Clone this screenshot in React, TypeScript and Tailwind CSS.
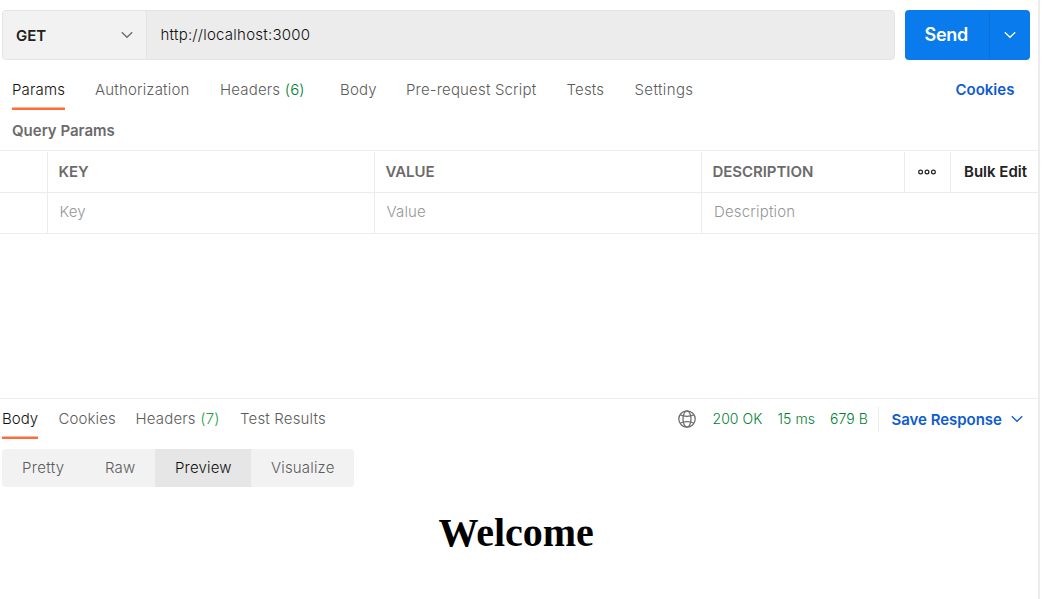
import type { ReactNode } from "react";

function Chevron({ className }: { className: string }) {
  return (
    <svg className={className} width="12" height="8" viewBox="0 0 12 8" fill="none" stroke="currentColor" strokeWidth="1.25">
      <path d="M0.8 1.2 L6 6.3 L11.2 1.2" />
    </svg>
  );
}

function Globe() {
  return (
    <svg className="shrink-0 text-[#6b6b6b]" width="18" height="18" viewBox="0 0 18 18" fill="none" stroke="currentColor" strokeWidth="1.25">
      <circle cx="9" cy="9" r="8.2" />
      <ellipse cx="9" cy="9" rx="4" ry="8.2" />
      <path d="M1.9 4.8 Q9 7.9 16.1 4.8 M1.9 13.2 Q9 10.1 16.1 13.2" />
    </svg>
  );
}

function Dots() {
  return (
    <svg className="-ml-[2px]" width="18" height="6" viewBox="0 0 18 6" fill="none" stroke="#212121" strokeWidth="1.2">
      <circle cx="2.6" cy="3" r="1.9" />
      <circle cx="9" cy="3" r="1.9" />
      <circle cx="15.4" cy="3" r="1.9" />
    </svg>
  );
}

function Tab({ className, active, children }: { className: string; active?: boolean; children: ReactNode }) {
  return (
    <div className={`shrink-0 ${className}`}>
      <div
        className={
          active
            ? "flex h-10 w-fit items-center border-b-2 border-[#ff6c37] pt-[2px] text-[#101010] shadow-[inset_0_-1px_0_#ffb59b]"
            : "flex h-10 w-fit items-center text-[#5c5c5c]"
        }
      >
        {children}
      </div>
    </div>
  );
}

function RequestBar() {
  return (
    <div className="flex h-[50px] pl-[2px]">
      <div className="flex w-[893px] overflow-hidden rounded-[4px] border border-[#e4e4e4] bg-[#ececec]">
        <div className="flex w-[144px] items-center justify-between border-r border-[#e4e4e4] bg-[#f2f2f2] px-[13px]">
          <span className="pt-[2px] font-semibold tracking-normal text-[#212121]">GET</span>
          <Chevron className="text-[#6b6b6b]" />
        </div>
        <div className="flex items-center pl-[13.5px] tracking-[0.23px] text-[#101010]">http://localhost:3000</div>
      </div>
      <div className="ml-[10px] flex w-[125px] overflow-hidden rounded-[4px] bg-[#097bed] text-white">
        <div className="flex w-[85px] items-center border-r border-[#0b70d9] pl-[19.5px] text-[18px] font-semibold tracking-[-0.25px]">
          Send
        </div>
        <div className="flex flex-1 items-center justify-center">
          <Chevron className="" />
        </div>
      </div>
    </div>
  );
}

function ParamsTable() {
  return (
    <div className="border-t border-[#ececec]">
      <div className="flex h-[42px] border-b border-[#ececec] pt-px font-semibold tracking-[-0.05px] text-[#6b6b6b]">
        <div className="w-[48px] border-r border-[#ececec]" />
        <div className="flex w-[327px] items-center border-r border-[#ececec] pl-[10.5px]">KEY</div>
        <div className="flex w-[327px] items-center border-r border-[#ececec] pl-[10.5px]">VALUE</div>
        <div className="flex w-[203px] items-center border-r border-[#ececec] pl-[10.5px]">DESCRIPTION</div>
        <div className="flex w-[46px] items-center justify-center border-r border-[#ececec]">
          <Dots />
        </div>
        <div className="flex items-center pl-[13px] tracking-normal whitespace-nowrap text-[#212121]">Bulk Edit</div>
      </div>
      <div className="flex h-[41px] border-b border-[#ececec] text-[#969696]">
        <div className="w-[48px] border-r border-[#ececec]" />
        <div className="flex w-[327px] items-center border-r border-[#ececec] pb-[2px] pl-[11.5px]">Key</div>
        <div className="flex w-[327px] items-center border-r border-[#ececec] pb-[2px] pl-[11.5px]">Value</div>
        <div className="flex items-center pb-[2px] pl-[12px]">Description</div>
      </div>
    </div>
  );
}

export default function App() {
  return (
    <div className="h-[599px] w-[1044px] overflow-hidden bg-white font-['Inter',sans-serif] text-[15px] leading-5 font-[360] tracking-[0.17px]">
      <div className="flex h-full w-[1040px] flex-col border-r-2 border-[#ececec] pt-[10px]">
        <RequestBar />

        <div className="flex h-[50px] pt-[10px] pl-[12px]">
          <Tab className="w-[83px]" active>Params</Tab>
          <Tab className="w-[125px]">Authorization</Tab>
          <Tab className="w-[120px]">
            Headers<span className="ml-[4.5px] text-[#007f31]">(6)</span>
          </Tab>
          <Tab className="w-[66px]">Body</Tab>
          <Tab className="w-[160.5px]">Pre-request Script</Tab>
          <Tab className="w-[68px]">Tests</Tab>
          <Tab className="w-[321px] tracking-[0.38px]">Settings</Tab>
          <div className="flex h-10 items-center font-semibold tracking-normal text-[#0f5bd0]">Cookies</div>
        </div>

        <div className="flex h-10 items-center pt-[2px] pl-3 font-semibold tracking-normal text-[#6b6b6b]">Query Params</div>
        <ParamsTable />

        <div className="mt-[164px] flex h-[41px] shrink-0 border-t border-[#ececec] pl-[2px]">
          <Tab className="w-[56.5px] tracking-normal" active>Body</Tab>
          <Tab className="w-[77px] tracking-[0.1px]">Cookies</Tab>
          <Tab className="w-[104.5px]">
            Headers<span className="ml-[4.5px] text-[#1fa046]">(7)</span>
          </Tab>
          <Tab className="w-[438px]">Test Results</Tab>
          <div className="flex h-10 items-center text-[14px] tracking-[0.04px] whitespace-nowrap text-[#007f31]">
            <Globe />
            <span className="ml-[16.5px] w-[65px]">200 OK</span>
            <span className="w-[52.5px] tracking-[0.1px]">15 ms</span>
            <span className="w-[48px]">679 B</span>
            <div className="h-[25px] w-px bg-[#ececec]" />
            <span className="ml-[12.5px] w-[119.5px] pt-px text-[15px] font-semibold tracking-[-0.03px] text-[#0f5bd0]">
              Save Response
            </span>
            <Chevron className="text-[#0f5bd0]" />
          </div>
        </div>

        <div className="mt-[10px] ml-[2px] flex h-[38px] w-[352px] shrink-0 overflow-hidden rounded-[4px] bg-[#f2f2f2] text-[#5c5c5c]">
          <div className="flex w-[83px] items-center pl-5 tracking-[0.32px]">Pretty</div>
          <div className="flex w-[70px] items-center pl-5">Raw</div>
          <div className="flex w-[96px] items-center bg-[#e6e6e6] pl-5 text-[#101010]">Preview</div>
          <div className="flex items-center pl-5">Visualize</div>
        </div>

        <h1 className="mt-[23px] pl-[438.5px] font-['Liberation_Serif',serif] text-[40px] leading-[46px] font-bold tracking-[-0.04px] text-black">
          Welcome
        </h1>
      </div>
    </div>
  );
}
